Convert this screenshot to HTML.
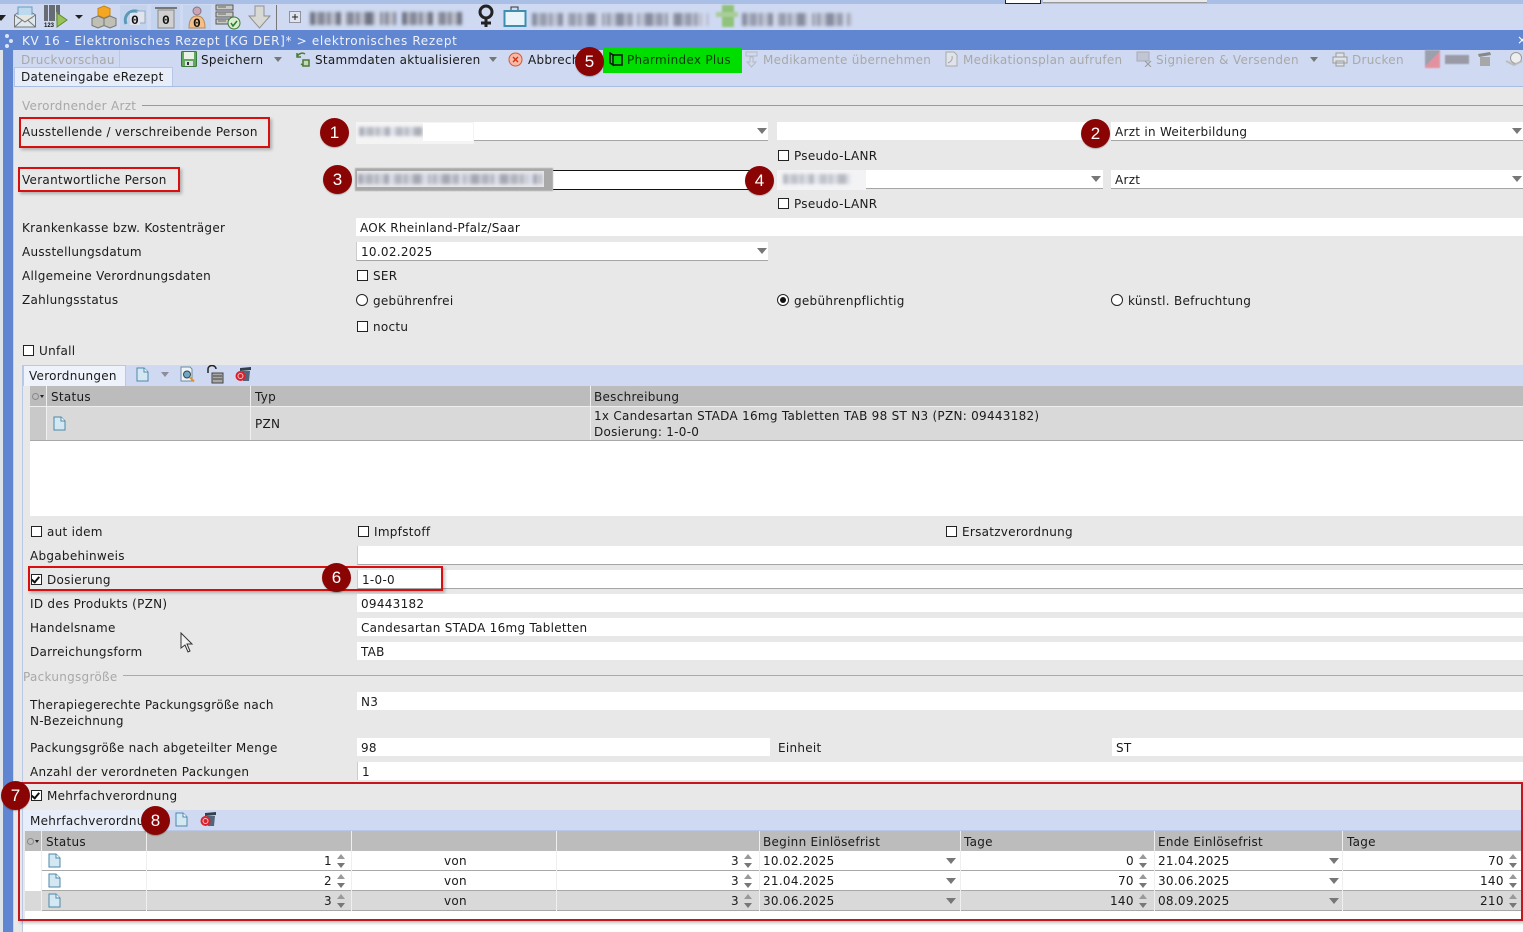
<!DOCTYPE html>
<html lang="de"><head><meta charset="utf-8"><title>KV 16 - Elektronisches Rezept</title>
<style>
html,body{margin:0;padding:0}
body{width:1523px;height:932px;position:relative;overflow:hidden;background:#e8e8e8;font:12px/16px "DejaVu Sans","Liberation Sans",sans-serif;color:#1a1a1a}
.a,.t,.f,.w,.c,.r,.n,.dd,.bx,.sp,.bl,svg.i{position:absolute}
.t{white-space:nowrap;height:16px;letter-spacing:.28px}
.g{color:#a8a8a8}
.f{background:#fff;height:18px}
.w{background:#fff;height:18px;border-bottom:1px solid #a5a5a5;box-sizing:content-box}
.c{width:9px;height:9px;border:1px solid #222;background:#fff}
.c.k:after{content:"";position:absolute;left:1px;top:0;width:3px;height:6px;border:solid #111;border-width:0 2px 2px 0;transform:rotate(40deg)}
.r{width:10px;height:10px;border:1px solid #222;background:#fff;border-radius:50%}
.r.k:after{content:"";position:absolute;left:2px;top:2px;width:6px;height:6px;background:#111;border-radius:50%}
.n{width:29px;height:29px;border-radius:50%;background:#8b0404;color:#fff;font:17px/29px "Liberation Sans",sans-serif;text-align:center;box-shadow:0 1px 1px rgba(0,0,0,.25)}
.bx{border:2px solid #d80f0f;box-sizing:border-box;box-shadow:2px 2px 3px rgba(0,0,0,.25)}
.dd{width:0;height:0;border:5px solid transparent;border-top:6px solid #777;border-bottom:0}
.sp{width:9px;height:14px}
.sp:before,.sp:after{content:"";position:absolute;left:0;width:0;height:0;border:4px solid transparent}
.sp:before{top:0;border-bottom:5px solid #999;border-top:0}
.sp:after{bottom:0;border-top:5px solid #777;border-bottom:0}
.bl{filter:blur(1.6px);background-image:repeating-linear-gradient(90deg,transparent 0 31px,#d6dcee 31px 35px),repeating-linear-gradient(90deg,#6f7384 0 5px,#b8bcc9 5px 8px,#858999 8px 15px,#cfd3de 15px 17px,#7b7f90 17px 20px,#b9bdca 20px 26px,#6f7384 26px 29px)}
.hd{position:absolute;background:#bcbcbc;height:19px}
.rw{position:absolute;height:19px;border-bottom:1px solid #a8a8a8;box-sizing:content-box}
.v{position:absolute;width:1px;background:#efefef}
</style></head><body>

<!-- top strips -->
<div class="a" style="left:0;top:0;width:1523px;height:4px;background:#aabfe6"></div>
<div class="a" style="left:0;top:4px;width:1523px;height:26px;background:#cfdaf2"></div>
<div class="a" style="left:1005px;top:0;width:36px;height:4px;background:#fff;border:1px solid #222;border-top:0;box-sizing:border-box"></div>
<div class="a" style="left:1043px;top:0;width:164px;height:3px;background:#e8e8ef;border-bottom:1px solid #999;box-sizing:border-box"></div>

<!-- toolbar icons row 1 -->
<div class="dd" style="left:-4px;top:15px;border-top-color:#222"></div>
<svg class="i" style="left:13px;top:5px" width="24" height="24" viewBox="0 0 24 24" fill="#dfe8ee" stroke="#777"><path d="M1.500 10 12 3l10.500 7v12h-21z"/><path d="M5 2h14v11H5z" fill="#bcd9ee" stroke="#6a9cc0"/><path d="M1.500 10 12 17l10.500-7M1.500 22l8-7M22.500 22l-8-7" fill="#e6e6e0"/></svg>
<svg class="i" style="left:44px;top:4px" width="26" height="24" viewBox="0 0 26 24"><path d="M1 1v16M3 1v16M6 1v16M8 1v16M10 1v16M13 1v16M15 1v10" stroke="#222" fill="none" stroke-width="1.200"/><text x="0" y="23" font-size="6" font-weight="700" font-family="Liberation Sans" fill="#111">123</text><path d="M13 9l10 7-10 7z" fill="#9ac25a" stroke="#5f8a2e"/></svg>
<div class="dd" style="left:75px;top:15px;border-top-color:#222;border-width:4px;border-top-width:4px;border-bottom:0"></div>
<svg class="i" style="left:91px;top:5px" width="26" height="24" viewBox="0 0 26 24" stroke="#777"><path d="M13 1l6 2.500v7L13 13l-6-2.500v-7z" fill="#f5a623" stroke="#c98516"/><path d="M7 11l6 2.500v7L7 23l-6-2.500v-7z" fill="#bfbfb4"/><path d="M19 11l6 2.500v7L19 23l-6-2.500v-7z" fill="#bfbfb4"/></svg>
<div class="a" style="left:120px;top:5px;width:27px;height:25px;background:#c4d3ee"></div>
<svg class="i" style="left:123px;top:7px" width="24" height="20" viewBox="0 0 24 20"><path d="M3 17C0 9 7 1 16 5" fill="none" stroke="#5a9ab8" stroke-width="3"/><path d="M14 4h8v12h-8z" fill="#dfe4ee" stroke="#9ab"/><rect x="7" y="6" width="10" height="12" fill="#dfe4ee"/><text x="8" y="17" font-size="13" font-weight="700" font-family="Liberation Mono" fill="#111">0</text></svg>
<div class="a" style="left:151px;top:5px;width:29px;height:25px;background:#c4d3ee"></div>
<svg class="i" style="left:154px;top:6px" width="24" height="24" viewBox="0 0 24 24"><path d="M1 2h22" stroke="#777" stroke-width="2"/><path d="M4 4h16v18H4z" fill="#d0d0d0" stroke="#888"/><text x="8" y="18" font-size="13" font-weight="700" font-family="Liberation Mono" fill="#111">0</text></svg>
<div class="a" style="left:183px;top:5px;width:28px;height:25px;background:#c4d3ee"></div>
<svg class="i" style="left:187px;top:6px" width="20" height="24" viewBox="0 0 20 24"><circle cx="10" cy="5" r="4" fill="#c8a6b4" stroke="#8a7080"/><path d="M2 22c0-8 3-12 8-12s8 4 8 12z" fill="#f2c088" stroke="#b88a5a"/><text x="6" y="21" font-size="13" font-weight="700" font-family="Liberation Mono" fill="#111">0</text></svg>
<svg class="i" style="left:215px;top:4px" width="27" height="26" viewBox="0 0 27 26"><path d="M1 1h17v5H1zM1 8h17v5H1zM1 15h17v5H1z" fill="#c9c9c4" stroke="#555"/><path d="M3 3h8M3 10h8M3 17h8" stroke="#666"/><circle cx="19" cy="19" r="6" fill="#d8eecc" stroke="#3a7a3a"/><path d="M16 19l2 3 4-5" fill="none" stroke="#2c7a2c" stroke-width="1.500"/></svg>
<svg class="i" style="left:248px;top:5px" width="23" height="24" viewBox="0 0 23 24"><path d="M7 1h9v10h6L11.500 23 1 11h6z" fill="#d8d8d4" stroke="#909090"/></svg>
<div class="a" style="left:276px;top:5px;width:1px;height:25px;background:#777"></div>
<svg class="i" style="left:289px;top:11px" width="12" height="12" viewBox="0 0 12 12"><rect x=".5" y=".5" width="11" height="11" fill="#dfe4ee" stroke="#444" stroke-dasharray="1 1"/><path d="M3 6h6M6 3v6" stroke="#222"/></svg>
<div class="bl" style="left:310px;top:12px;width:86px;height:13px"></div>
<div class="bl" style="left:402px;top:12px;width:60px;height:13px"></div>
<svg class="i" style="left:476px;top:4px" width="20" height="24" viewBox="0 0 20 24"><circle cx="10" cy="8" r="6" fill="none" stroke="#222" stroke-width="3"/><path d="M10 14v9M5 19h10" stroke="#222" stroke-width="3"/></svg>
<svg class="i" style="left:503px;top:5px" width="24" height="22" viewBox="0 0 24 22"><path d="M8 6V2h7v4" fill="none" stroke="#333"/><rect x="1.500" y="6" width="21" height="15" fill="#e8f4fa" stroke="#3d8fb0" stroke-width="2"/></svg>
<div class="bl" style="left:532px;top:13px;width:176px;height:13px;opacity:.75"></div>
<div class="a" style="left:722px;top:5px;width:12px;height:22px;background:#8fc27a;filter:blur(1px)"></div>
<div class="a" style="left:716px;top:12px;width:22px;height:5px;background:#a9cc99;filter:blur(1px)"></div>
<div class="bl" style="left:742px;top:13px;width:110px;height:13px;opacity:.75"></div>

<!-- title bar -->
<div class="a" style="left:0;top:30px;width:1523px;height:20px;background:#6086d2"></div>
<div class="t" style="left:22px;top:33px;color:#eef2fb;letter-spacing:.66px">KV 16 - Elektronisches Rezept [KG DER]* &gt; elektronisches Rezept</div>
<div class="a" style="left:5px;top:34px;width:4px;height:4px;background:#dbe4f6;border-radius:50%;box-shadow:4px 5px 0 #dbe4f6,0 10px 0 #dbe4f6"></div>
<div class="t" style="left:1517px;top:32px;color:#fff">×</div>

<!-- left rail -->
<div class="a" style="left:0;top:50px;width:3px;height:882px;background:#dfe3ea"></div>
<div class="a" style="left:3px;top:50px;width:10px;height:882px;background:#6086d2"></div>
<div class="a" style="left:13px;top:50px;width:1px;height:882px;background:#c8d4ee"></div>

<!-- action bar -->
<div class="a" style="left:14px;top:50px;width:1509px;height:36px;background:#cfdaf2;border-bottom:1px solid #a9bde2;box-sizing:content-box"></div>
<div class="t g" style="left:21px;top:52px">Druckvorschau</div>
<div class="a" style="left:119px;top:50px;width:1px;height:17px;background:#bac8e6"></div>
<div class="a" style="left:14px;top:67px;width:159px;height:19px;background:#e8eef9;border:1px solid #b7c6e6;border-bottom:0;box-sizing:border-box"></div>
<div class="t" style="left:21px;top:69px">Dateneingabe eRezept</div>

<svg class="i" style="left:181px;top:51px" width="16" height="16" viewBox="0 0 16 16"><rect x=".5" y=".5" width="15" height="15" rx="1" fill="#63a85f" stroke="#3c7a3c"/><rect x="3" y="1" width="10" height="7" fill="#e8f2e6"/><rect x="4" y="10" width="8" height="5" fill="#dde"/><rect x="6" y="11" width="2" height="3" fill="#333"/></svg>
<div class="t" style="left:201px;top:52px">Speichern</div>
<div class="dd" style="left:274px;top:57px;border-width:4px;border-top-width:5px;border-bottom:0"></div>
<svg class="i" style="left:295px;top:51px" width="16" height="16" viewBox="0 0 16 16" fill="none" stroke="#4b7a34" stroke-width="1.500"><path d="M2 6c1-3 5-5 8-3M2 2v4h4"/><path d="M14 10c-1 3-5 5-8 3"/><path d="M8 9h6v6H8z" fill="#c5d8b8"/></svg>
<div class="t" style="left:315px;top:52px">Stammdaten aktualisieren</div>
<div class="dd" style="left:489px;top:57px;border-width:4px;border-top-width:5px;border-bottom:0"></div>
<svg class="i" style="left:508px;top:52px" width="15" height="15" viewBox="0 0 15 15"><circle cx="7.500" cy="7.500" r="6.500" fill="#f9b9a5" stroke="#d9552f"/><path d="M5 5l5 5M10 5l-5 5" stroke="#c8321a" stroke-width="1.300"/></svg>
<div class="t" style="left:528px;top:52px">Abbrechen</div>
<div class="a" style="left:603px;top:48px;width:139px;height:25px;background:#00de00"></div>
<svg class="i" style="left:608px;top:52px" width="15" height="15" viewBox="0 0 15 15" fill="none" stroke="#111" stroke-width="1.500"><path d="M2 1l3 2v10l-3-2z"/><path d="M5 3h9v10H5"/></svg>
<div class="t" style="left:627px;top:52px;color:#0b3a0b">Pharmindex Plus</div>
<svg class="i" style="left:744px;top:51px" width="15" height="17" viewBox="0 0 15 17" fill="none" stroke="#b6b8bd"><path d="M2 1h11v4H2zM6 6v5H3l4.500 5L12 11H9V6z"/></svg>
<div class="t g" style="left:763px;top:52px">Medikamente übernehmen</div>
<svg class="i" style="left:945px;top:51px" width="13" height="16" viewBox="0 0 13 16" fill="#dfe3ea" stroke="#a8a8a8"><path d="M1 1h8l3 3v11H1z"/><path d="M3 12c3-1 5-4 4-7" fill="none"/></svg>
<div class="t g" style="left:963px;top:52px">Medikationsplan aufrufen</div>
<svg class="i" style="left:1136px;top:51px" width="16" height="16" viewBox="0 0 16 16" fill="#c0c6d2" stroke="#aab"><rect x="1" y="1" width="12" height="9"/><path d="M9 10l6 6M15 10l-6 6" fill="none" stroke="#999"/></svg>
<div class="t g" style="left:1156px;top:52px">Signieren &amp; Versenden</div>
<div class="dd" style="left:1310px;top:57px;border-width:4px;border-top-width:5px;border-bottom:0"></div>
<svg class="i" style="left:1332px;top:52px" width="16" height="15" viewBox="0 0 16 15" fill="#dfe3ea" stroke="#999"><path d="M4 1h8v4H4zM1 5h14v6H1zM4 9h8v5H4z"/></svg>
<div class="t g" style="left:1352px;top:52px">Drucken</div>
<div class="a" style="left:1425px;top:50px;width:15px;height:18px;background:linear-gradient(135deg,#9aa0ad 0 50%,#e2929f 50%);filter:blur(.8px)"></div>
<div class="a" style="left:1445px;top:55px;width:24px;height:9px;background:#9a9aa6;filter:blur(.8px)"></div>
<svg class="i" style="left:1477px;top:51px" width="15" height="16" viewBox="0 0 15 16"><path d="M1 3l12-2 1 3-12 2z" fill="#888"/><path d="M3 6h10v9H3z" fill="#a7a7a7"/></svg>
<svg class="i" style="left:1505px;top:51px" width="18" height="16" viewBox="0 0 18 16"><circle cx="11" cy="7" r="5.500" fill="#eee" stroke="#999"/><path d="M1 10l8 4 8-4" fill="none" stroke="#bbb" stroke-width="2"/></svg>

<!-- Verordnender Arzt -->
<div class="t g" style="left:22px;top:98px">Verordnender Arzt</div>
<div class="a" style="left:142px;top:105px;width:1381px;height:1px;background:#999"></div>

<div class="t" style="left:22px;top:124px">Ausstellende / verschreibende Person</div>
<div class="bx" style="left:19px;top:117px;width:251px;height:31px"></div>
<div class="w" style="left:474px;top:122px;width:294px"></div>
<div class="a" style="left:356px;top:122px;width:118px;height:22px;background:#f4f4f5"></div>
<div class="bl" style="left:359px;top:127px;width:64px;height:9px;opacity:.55"></div>
<div class="a" style="left:423px;top:123px;width:50px;height:18px;background:#fff"></div>
<div class="dd" style="left:757px;top:128px"></div>
<div class="f" style="left:777px;top:122px;width:310px"></div>
<div class="w" style="left:1111px;top:122px;width:412px"></div>
<div class="t" style="left:1115px;top:124px">Arzt in Weiterbildung</div>
<div class="dd" style="left:1512px;top:128px"></div>
<div class="c" style="left:778px;top:150px"></div><div class="t" style="left:794px;top:148px">Pseudo-LANR</div>

<div class="t" style="left:22px;top:172px">Verantwortliche Person</div>
<div class="bx" style="left:18px;top:167px;width:162px;height:25px"></div>
<div class="a" style="left:553px;top:170px;width:200px;height:18px;background:#fff;border:solid #111;border-width:1px 0;box-sizing:content-box"></div>
<div class="a" style="left:355px;top:168px;width:198px;height:23px;background:#a9a9a9;filter:blur(.4px)"></div>
<div class="a" style="left:357px;top:171px;width:187px;height:16px;background:#e6e6ea"></div>
<div class="bl" style="left:358px;top:174px;width:184px;height:10px;opacity:.55"></div>
<div class="w" style="left:866px;top:170px;width:237px"></div>
<div class="a" style="left:777px;top:170px;width:89px;height:20px;background:#f3f3f5"></div>
<div class="bl" style="left:783px;top:174px;width:68px;height:10px;opacity:.45"></div>
<div class="dd" style="left:1091px;top:176px"></div>
<div class="w" style="left:1111px;top:170px;width:412px"></div>
<div class="t" style="left:1115px;top:172px">Arzt</div>
<div class="dd" style="left:1512px;top:176px"></div>
<div class="c" style="left:778px;top:198px"></div><div class="t" style="left:794px;top:196px">Pseudo-LANR</div>

<div class="t" style="left:22px;top:220px">Krankenkasse bzw. Kostenträger</div>
<div class="f" style="left:356px;top:218px;width:1167px"></div>
<div class="t" style="left:360px;top:220px">AOK Rheinland-Pfalz/Saar</div>
<div class="t" style="left:22px;top:244px">Ausstellungsdatum</div>
<div class="w" style="left:356px;top:242px;width:411px;border-left:1px solid #ccc"></div>
<div class="t" style="left:361px;top:244px">10.02.2025</div>
<div class="dd" style="left:757px;top:248px"></div>
<div class="t" style="left:22px;top:268px">Allgemeine Verordnungsdaten</div>
<div class="c" style="left:357px;top:270px"></div><div class="t" style="left:373px;top:268px">SER</div>
<div class="t" style="left:22px;top:292px">Zahlungsstatus</div>
<div class="r" style="left:356px;top:294px"></div><div class="t" style="left:373px;top:293px">gebührenfrei</div>
<div class="r k" style="left:777px;top:294px"></div><div class="t" style="left:794px;top:293px">gebührenpflichtig</div>
<div class="r" style="left:1111px;top:294px"></div><div class="t" style="left:1128px;top:293px">künstl. Befruchtung</div>
<div class="c" style="left:357px;top:321px"></div><div class="t" style="left:373px;top:319px">noctu</div>
<div class="c" style="left:23px;top:345px"></div><div class="t" style="left:39px;top:343px">Unfall</div>

<!-- panel side line -->
<div class="a" style="left:22px;top:365px;width:1px;height:567px;background:#b9c8e6"></div>
<div class="a" style="left:23px;top:920px;width:1500px;height:12px;background:#fff"></div>

<!-- Verordnungen -->
<div class="a" style="left:23px;top:365px;width:1500px;height:21px;background:#cfdaf2"></div>
<div class="a" style="left:23px;top:365px;width:103px;height:21px;background:#eef2fa;border:1px solid #b9c8e6;border-bottom:0;box-sizing:border-box"></div>
<div class="t" style="left:29px;top:368px">Verordnungen</div>
<svg class="i" style="left:136px;top:367px" width="13" height="15" viewBox="0 0 13 15"><path d="M1 1h7l4 4v9H1z" fill="#d4e8f3" stroke="#4d87a8"/><path d="M8 1v4h4" fill="#fff" stroke="#4d87a8"/></svg>
<div class="dd" style="left:161px;top:372px;border-width:4px;border-top-width:5px;border-bottom:0;border-top-color:#8d8d9a"></div>
<svg class="i" style="left:180px;top:366px" width="16" height="17" viewBox="0 0 16 17"><path d="M1 1h9l2 2v12H1z" fill="#eef3f6" stroke="#6d8b9e"/><circle cx="7" cy="8.500" r="3.500" fill="#6fa6c2" stroke="#345"/><path d="M10 11.500l4 4" stroke="#e0932e" stroke-width="2"/></svg>
<svg class="i" style="left:206px;top:365px" width="18" height="19" viewBox="0 0 18 19"><path d="M2 8V4a4 3.500 0 0 1 8 0" fill="none" stroke="#222" stroke-width="1.500"/><rect x="6" y="8" width="11" height="10" fill="#a8a8a8" stroke="#444"/><path d="M7 11h9M7 14h9" stroke="#444"/></svg>
<svg class="i" style="left:235px;top:366px" width="17" height="16" viewBox="0 0 17 16"><path d="M5 2l11-1 0 3-11 1z" fill="#33404e"/><path d="M7 5h8l-1 10H8z" fill="#52657a"/><circle cx="5.500" cy="10" r="5" fill="#d8202e"/><circle cx="5.500" cy="10" r="2.500" fill="none" stroke="#f4c6c6"/></svg>

<div class="hd" style="left:30px;top:386px;width:1493px;height:20px"></div>
<div class="a" style="left:30px;top:406px;width:1493px;height:35px;background:#d9d9d9;border-bottom:1px solid #a8a8a8;box-sizing:border-box"></div>
<div class="a" style="left:30px;top:441px;width:1493px;height:75px;background:#fff"></div>
<div class="a" style="left:30px;top:406px;width:1493px;height:1px;background:#eee"></div>
<div class="a" style="left:30px;top:407px;width:16px;height:33px;background:#c9c9c9"></div>
<div class="v" style="left:46px;top:386px;height:54px"></div>
<div class="v" style="left:250px;top:386px;height:54px"></div>
<div class="v" style="left:590px;top:386px;height:54px"></div>
<div class="a" style="left:32px;top:393px;width:5px;height:5px;border:1px solid #888;border-radius:50%"></div>
<div class="dd" style="left:40px;top:395px;border-width:2px;border-top-width:3px;border-bottom:0;border-top-color:#222"></div>
<div class="t" style="left:51px;top:389px">Status</div>
<div class="t" style="left:255px;top:389px">Typ</div>
<div class="t" style="left:594px;top:389px">Beschreibung</div>
<svg class="i" style="left:53px;top:416px" width="13" height="15" viewBox="0 0 13 15"><path d="M1 1h7l4 4v9H1z" fill="#d4e8f3" stroke="#4d87a8"/><path d="M8 1v4h4" fill="#fff" stroke="#4d87a8"/></svg>
<div class="t" style="left:255px;top:416px">PZN</div>
<div class="t" style="left:594px;top:408px">1x Candesartan STADA 16mg Tabletten TAB 98 ST N3 (PZN: 09443182)</div>
<div class="t" style="left:594px;top:424px">Dosierung: 1-0-0</div>

<!-- options -->
<div class="c" style="left:31px;top:526px"></div><div class="t" style="left:47px;top:524px">aut idem</div>
<div class="c" style="left:358px;top:526px"></div><div class="t" style="left:374px;top:524px">Impfstoff</div>
<div class="c" style="left:946px;top:526px"></div><div class="t" style="left:962px;top:524px">Ersatzverordnung</div>
<div class="t" style="left:30px;top:548px">Abgabehinweis</div>
<div class="w" style="left:357px;top:546px;width:1166px;border-left:1px solid #ccc"></div>
<div class="c k" style="left:31px;top:574px"></div><div class="t" style="left:47px;top:572px">Dosierung</div>
<div class="w" style="left:357px;top:570px;width:1166px;border-left:1px solid #ccc"></div>
<div class="t" style="left:362px;top:572px">1-0-0</div>
<div class="bx" style="left:28px;top:566px;width:415px;height:25px"></div>
<div class="t" style="left:30px;top:596px">ID des Produkts (PZN)</div>
<div class="f" style="left:357px;top:594px;width:1166px"></div><div class="t" style="left:361px;top:596px">09443182</div>
<div class="t" style="left:30px;top:620px">Handelsname</div>
<div class="f" style="left:357px;top:618px;width:1166px"></div><div class="t" style="left:361px;top:620px">Candesartan STADA 16mg Tabletten</div>
<div class="t" style="left:30px;top:644px">Darreichungsform</div>
<div class="f" style="left:357px;top:642px;width:1166px"></div><div class="t" style="left:361px;top:644px">TAB</div>
<svg class="i" style="left:180px;top:632px" width="14" height="21" viewBox="0 0 14 21"><path d="M1 1v15l4-3 3 7 2-1-3-7h5z" fill="#f2f2f2" stroke="#333"/></svg>

<div class="t g" style="left:23px;top:669px">Packungsgröße</div>
<div class="a" style="left:123px;top:675px;width:1400px;height:1px;background:#aaa"></div>
<div class="t" style="left:30px;top:697px">Therapiegerechte Packungsgröße nach</div>
<div class="t" style="left:30px;top:713px">N-Bezeichnung</div>
<div class="f" style="left:357px;top:692px;width:1166px"></div><div class="t" style="left:361px;top:694px">N3</div>
<div class="t" style="left:30px;top:740px">Packungsgröße nach abgeteilter Menge</div>
<div class="f" style="left:357px;top:738px;width:413px"></div><div class="t" style="left:361px;top:740px">98</div>
<div class="t" style="left:778px;top:740px">Einheit</div>
<div class="f" style="left:1112px;top:738px;width:411px"></div><div class="t" style="left:1116px;top:740px">ST</div>
<div class="t" style="left:30px;top:764px">Anzahl der verordneten Packungen</div>
<div class="f" style="left:357px;top:762px;width:1166px;border-left:1px solid #ccc"></div><div class="t" style="left:362px;top:764px">1</div>

<!-- Mehrfachverordnung -->
<div class="c k" style="left:31px;top:790px"></div><div class="t" style="left:47px;top:788px">Mehrfachverordnung</div>
<div class="a" style="left:23px;top:810px;width:1500px;height:21px;background:#cfdaf2;border-bottom:1px solid #b9c8e6;box-sizing:border-box"></div>
<div class="a" style="left:23px;top:810px;width:130px;height:21px;background:#e8eef9"></div>
<div class="t" style="left:30px;top:813px">Mehrfachverordnung</div>
<svg class="i" style="left:175px;top:812px" width="13" height="15" viewBox="0 0 13 15"><path d="M1 1h7l4 4v9H1z" fill="#d4e8f3" stroke="#4d87a8"/><path d="M8 1v4h4" fill="#fff" stroke="#4d87a8"/></svg>
<svg class="i" style="left:200px;top:811px" width="17" height="16" viewBox="0 0 17 16"><path d="M5 2l11-1 0 3-11 1z" fill="#33404e"/><path d="M7 5h8l-1 10H8z" fill="#52657a"/><circle cx="5.500" cy="10" r="5" fill="#d8202e"/><circle cx="5.500" cy="10" r="2.500" fill="none" stroke="#f4c6c6"/></svg>

<div class="hd" style="left:25px;top:831px;width:1498px;height:20px"></div>
<div class="a" style="left:25px;top:851px;width:1498px;height:69px;background:#fff"></div>
<div class="rw" style="left:25px;top:851px;width:1498px;background:#fff"></div>
<div class="rw" style="left:25px;top:871px;width:1498px;background:#fff"></div>
<div class="rw" style="left:25px;top:891px;width:1498px;background:#d9d9d9"></div>
<div class="a" style="left:25px;top:851px;width:16px;height:60px;background:linear-gradient(#fff 0 40px,#d9d9d9 40px)"></div>
<div class="v" style="left:41px;top:831px;height:80px"></div>
<div class="v" style="left:146px;top:831px;height:80px"></div>
<div class="v" style="left:351px;top:831px;height:80px"></div>
<div class="v" style="left:556px;top:831px;height:80px"></div>
<div class="v" style="left:759px;top:831px;height:80px"></div>
<div class="v" style="left:960px;top:831px;height:80px"></div>
<div class="v" style="left:1154px;top:831px;height:80px"></div>
<div class="v" style="left:1342px;top:831px;height:80px"></div>
<div class="a" style="left:27px;top:838px;width:5px;height:5px;border:1px solid #888;border-radius:50%"></div>
<div class="dd" style="left:35px;top:840px;border-width:2px;border-top-width:3px;border-bottom:0;border-top-color:#222"></div>
<div class="t" style="left:46px;top:834px">Status</div>
<div class="t" style="left:763px;top:834px">Beginn Einlösefrist</div>
<div class="t" style="left:964px;top:834px">Tage</div>
<div class="t" style="left:1158px;top:834px">Ende Einlösefrist</div>
<div class="t" style="left:1347px;top:834px">Tage</div>

<svg class="i" style="left:48px;top:853px" width="13" height="15" viewBox="0 0 13 15"><path d="M1 1h7l4 4v9H1z" fill="#d4e8f3" stroke="#4d87a8"/><path d="M8 1v4h4" fill="#fff" stroke="#4d87a8"/></svg>
<svg class="i" style="left:48px;top:873px" width="13" height="15" viewBox="0 0 13 15"><path d="M1 1h7l4 4v9H1z" fill="#d4e8f3" stroke="#4d87a8"/><path d="M8 1v4h4" fill="#fff" stroke="#4d87a8"/></svg>
<svg class="i" style="left:48px;top:893px" width="13" height="15" viewBox="0 0 13 15"><path d="M1 1h7l4 4v9H1z" fill="#d4e8f3" stroke="#4d87a8"/><path d="M8 1v4h4" fill="#fff" stroke="#4d87a8"/></svg>

<!-- row 1 -->
<div class="t" style="left:324px;top:853px">1</div><div class="sp" style="left:337px;top:854px"></div>
<div class="t" style="left:444px;top:853px">von</div>
<div class="t" style="left:731px;top:853px">3</div><div class="sp" style="left:744px;top:854px"></div>
<div class="t" style="left:763px;top:853px">10.02.2025</div><div class="dd" style="left:946px;top:858px"></div>
<div class="t" style="left:1126px;top:853px">0</div><div class="sp" style="left:1139px;top:854px"></div>
<div class="t" style="left:1158px;top:853px">21.04.2025</div><div class="dd" style="left:1329px;top:858px"></div>
<div class="t" style="left:1488px;top:853px">70</div><div class="sp" style="left:1509px;top:854px"></div>
<!-- row 2 -->
<div class="t" style="left:324px;top:873px">2</div><div class="sp" style="left:337px;top:874px"></div>
<div class="t" style="left:444px;top:873px">von</div>
<div class="t" style="left:731px;top:873px">3</div><div class="sp" style="left:744px;top:874px"></div>
<div class="t" style="left:763px;top:873px">21.04.2025</div><div class="dd" style="left:946px;top:878px"></div>
<div class="t" style="left:1118px;top:873px">70</div><div class="sp" style="left:1139px;top:874px"></div>
<div class="t" style="left:1158px;top:873px">30.06.2025</div><div class="dd" style="left:1329px;top:878px"></div>
<div class="t" style="left:1480px;top:873px">140</div><div class="sp" style="left:1509px;top:874px"></div>
<!-- row 3 -->
<div class="t" style="left:324px;top:893px">3</div><div class="sp" style="left:337px;top:894px"></div>
<div class="t" style="left:444px;top:893px">von</div>
<div class="t" style="left:731px;top:893px">3</div><div class="sp" style="left:744px;top:894px"></div>
<div class="t" style="left:763px;top:893px">30.06.2025</div><div class="dd" style="left:946px;top:898px"></div>
<div class="t" style="left:1110px;top:893px">140</div><div class="sp" style="left:1139px;top:894px"></div>
<div class="t" style="left:1158px;top:893px">08.09.2025</div><div class="dd" style="left:1329px;top:898px"></div>
<div class="t" style="left:1480px;top:893px">210</div><div class="sp" style="left:1509px;top:894px"></div>

<div class="bx" style="left:18px;top:782px;width:1505px;height:139px;border-color:#c4161c"></div>

<!-- number badges -->
<div class="n" style="left:320px;top:118px">1</div>
<div class="n" style="left:1081px;top:119px">2</div>
<div class="n" style="left:323px;top:165px">3</div>
<div class="n" style="left:745px;top:166px">4</div>
<div class="n" style="left:575px;top:47px">5</div>
<div class="n" style="left:322px;top:563px">6</div>
<div class="n" style="left:1px;top:781px">7</div>
<div class="n" style="left:141px;top:806px">8</div>
</body></html>
